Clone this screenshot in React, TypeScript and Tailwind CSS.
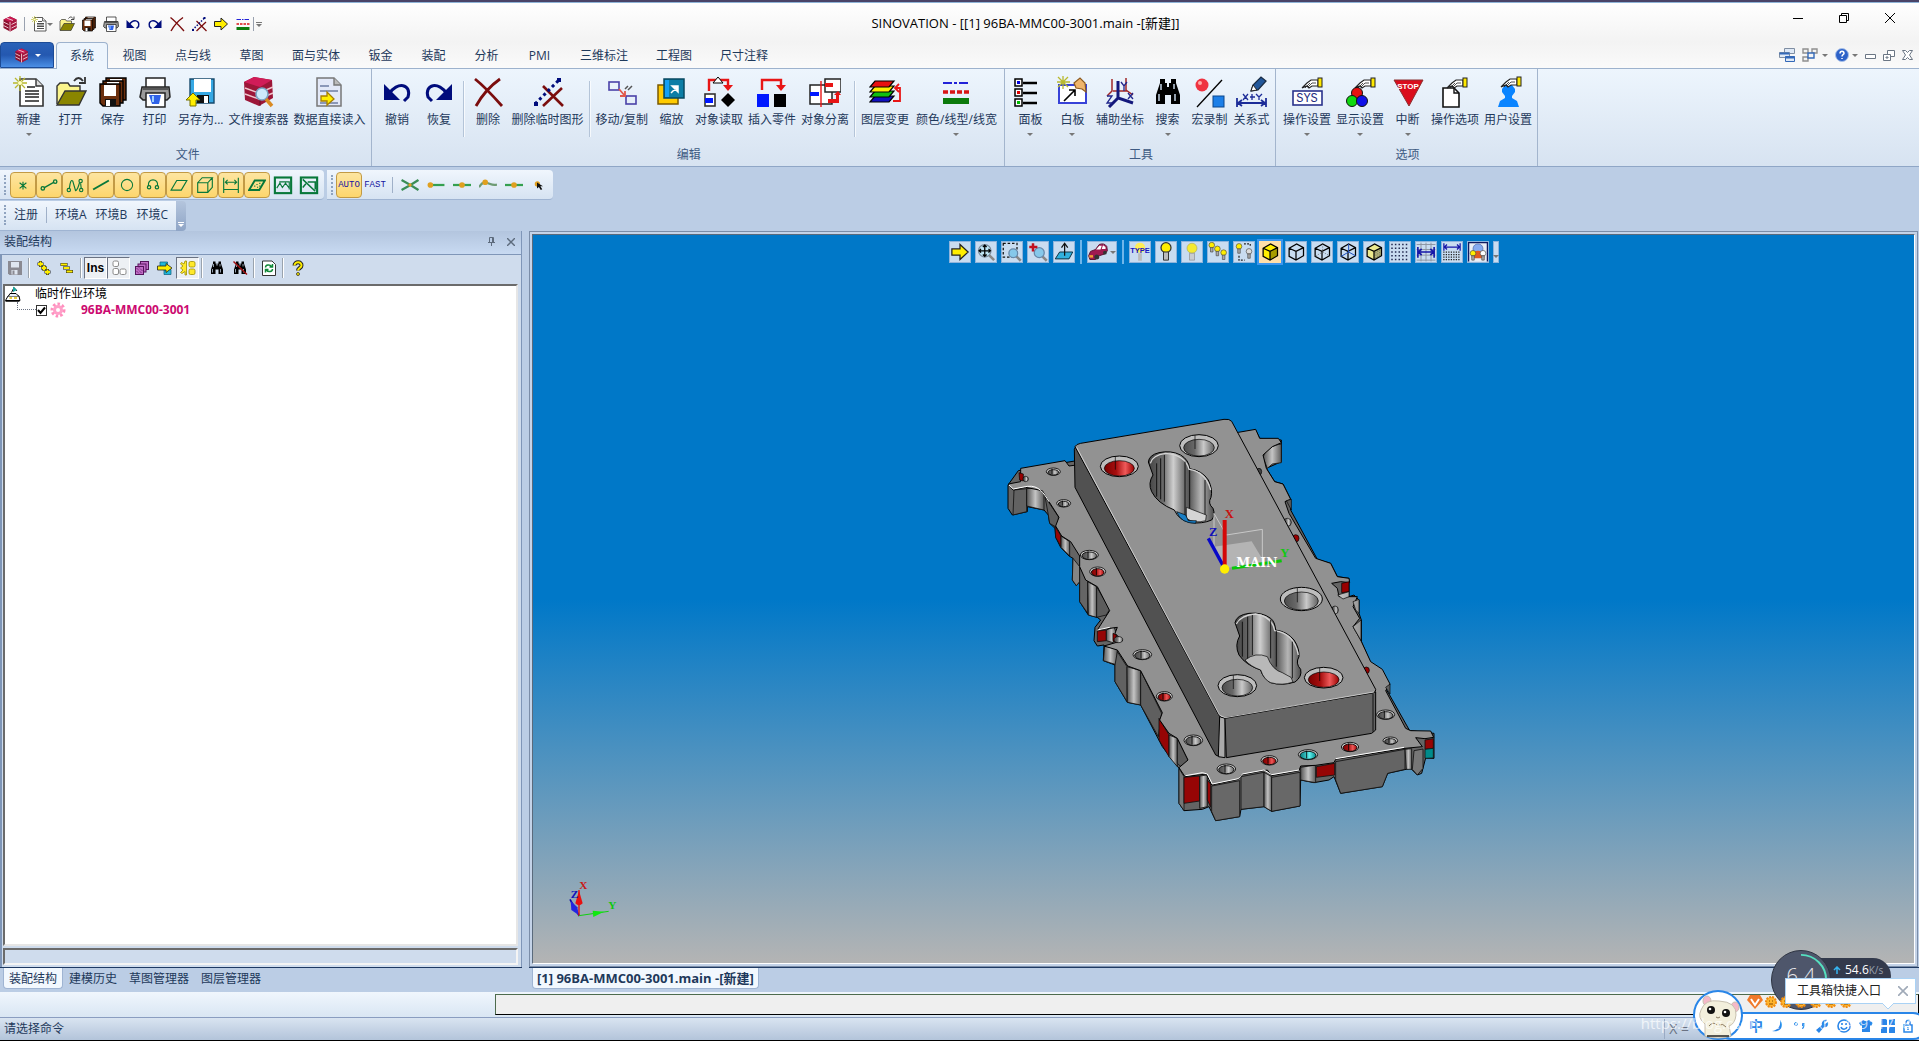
import React, { useState } from 'react'

interface RibbonItem {
  label: string
  icon: string
  menu?: boolean
  wide?: boolean
}

interface RibbonGroupData {
  title: string
  sections: RibbonItem[][]
}

const hand = (
  <g>
    <path d="M5 11L10 6L14 3H21V9H15L12 11L10 9Z" fill="#fff" stroke="#222" strokeWidth="1.1" />
    <path d="M8 11l5-5M11 10l4-4M15 6h4" stroke="#222" strokeWidth=".8" fill="none" />
    <rect x="21" y="1" width="4" height="9" fill="#ffe900" stroke="#222" />
  </g>
)

const binoculars = (
  <g fill="#000">
    <path d="M8 3h5v4h2v4h2V7h2V3h5v4l4 12v9h-9v-9h-6v9H4v-9L8 7z" />
    <path d="M9 8v6M7 18v7M22 8v5M23 18v7" stroke="#b9c8d8" strokeWidth="1.6" />
  </g>
)

const cubeLines = (
  <path d="M5 10 L17 3 L28 9 V22 L16 29 L5 23 Z M5 10 L16 15 L28 9 M16 15 V29" fill="none" stroke="#000" strokeWidth="2" />
)

const bulb = (x: number, y: number, fill: string) => (
  <g transform={`translate(${x} ${y})`}>
    <circle cx="5" cy="5" r="4.5" fill={fill} stroke="#444" />
    <path d="M3 9h4v7H3z" fill="#aaa" stroke="#444" />
  </g>
)

const floppy = (body: string, x: number, y: number) => (
  <g transform={`translate(${x} ${y})`}>
    <path d="M0 0h20v22H3l-3-3z" fill={body} stroke="#000" strokeWidth="1.4" />
    <rect x="4" y="1" width="12" height="11" fill="#fff" />
    <rect x="5" y="15" width="11" height="7" fill="#111" />
    <rect x="6" y="16" width="4" height="6" fill="#fff" />
  </g>
)

const cubeLogo = (
  <g>
    <path d="M3 7 L16 1 L29 7 V24 L16 31 L3 24 Z" fill="#8d1230" />
    <path d="M3 7 L16 1 L29 7 L16 12 Z" fill="#c81850" />
    <path d="M16 12 V31 L29 24 V7 Z" fill="#a81840" />
    <path d="M3 12 L13 17 M3 19 L13 24 M29 12 L19 17 M29 19 L19 24 M16 12 V31 M9 4 L22 9" stroke="#f4d5dc" strokeWidth="1.8" />
  </g>
)

// Cube without the white seams, used under the search lens
const cubeDark = (
  <g>
    <path d="M2 6 L12 1 L30 4 L31 22 L17 30 L3 24 Z" fill="#9c1638" />
    <path d="M2 6 L12 1 L30 4 L18 11 Z" fill="#d01c58" />
    <path d="M3 12l14 5 14-6M3 18l14 5 14-6" fill="none" stroke="#f0c4cc" strokeWidth="1.5" />
    <path d="M18 11v19" stroke="#6a0c22" />
  </g>
)

const icons: Record<string, React.ReactNode> = {
  logo: cubeLogo,
  new: (
    <g>
      <path d="M7 3h16l7 7v20H7z" fill="#fff" stroke="#333" strokeWidth="1.6" />
      <path d="M23 3v7h7" fill="#ddd" stroke="#333" strokeWidth="1.4" />
      <path d="M14 11h8M12 15h14M12 18h14M12 21h14M12 25h14" stroke="#222" strokeWidth="1.6" />
      <path d="M7 0v15M0 7h14M2 2l10 10M12 2L2 12" stroke="#b9b92e" strokeWidth="1.3" />
      <circle cx="7" cy="7" r="2" fill="#ffffc0" />
    </g>
  ),
  open: (
    <g>
      <path d="M2 28V10l3-3h8l2 3h10v5" fill="#fbf58c" stroke="#333" strokeWidth="1.4" />
      <path d="M2 29L10 15h21L24 29z" fill="#8a8500" stroke="#333" strokeWidth="1.4" />
      <path d="M19 5c3-4 6-4 9 0M30 1v6h-6" fill="none" stroke="#333" strokeWidth="1.8" />
    </g>
  ),
  save: <g>{floppy('#6b2f0d', 9, 2)}{floppy('#6b2f0d', 6, 5)}{floppy('#6b2f0d', 3, 8)}</g>,
  print: (
    <g>
      <path d="M7 2h19v10H7z" fill="#fff" stroke="#222" strokeWidth="1.5" />
      <path d="M3 11h27l1 10-3 3H4l-3-3z" fill="#9a9a9a" stroke="#222" strokeWidth="1.5" />
      <path d="M4 13h25" stroke="#555" strokeWidth="2" />
      <path d="M7 17h19v14H7z" fill="#fff" stroke="#222" strokeWidth="1.5" />
      <path d="M10 19h12l-2 9h-7z" fill="#2f62e8" />
      <path d="M14 20v6" stroke="#9fd0ff" strokeWidth="2" />
    </g>
  ),
  saveAs: (
    <g>
      <path d="M5 3h24v24H9l-4-4z" fill="#36a8e4" stroke="#174a6c" strokeWidth="1.4" />
      <rect x="9" y="3" width="17" height="13" fill="#fff" />
      <path d="M12 19h12v8H12z" fill="#111" />
      <path d="M19 20h4v7h-4z" fill="#fff" />
      <path d="M8 17l7 7h-4v6H5v-6H1z" fill="#ffee00" stroke="#777200" />
    </g>
  ),
  finder: (
    <g>
      {cubeDark}
      <circle cx="20" cy="18" r="6" fill="#cdeafb" stroke="#7aa5c4" strokeWidth="1.6" />
      <path d="M24 23l6 7" stroke="#d98a22" strokeWidth="3.5" />
    </g>
  ),
  dataRead: (
    <g>
      <path d="M4 2h17l7 7v21H4z" fill="#e3e9f8" stroke="#777" strokeWidth="1.5" />
      <path d="M21 2v7h7" fill="#bbb" stroke="#777" strokeWidth="1.4" />
      <path d="M7 10h9M7 15h18M7 27h18" stroke="#8b98b8" strokeWidth="1.8" />
      <path d="M8 20h6v-4l7 7-7 6v-4H8z" fill="#ffee00" stroke="#a87f00" strokeWidth="1.3" />
    </g>
  ),
  undo: (
    <g>
      <path d="M3 8v16h16z" fill="#000c7c" />
      <path d="M8 18C16 5 31 8 27 21l-4 4" fill="none" stroke="#000c7c" strokeWidth="3" />
    </g>
  ),
  redo: (
    <g>
      <path d="M29 8v16H13z" fill="#000c7c" />
      <path d="M24 18C16 5 1 8 5 21l4 4" fill="none" stroke="#000c7c" strokeWidth="3" />
    </g>
  ),
  cross: <path d="M3 3C12 10 22 21 30 30M28 3C18 10 9 21 4 30" fill="none" stroke="#7b0d0d" strokeWidth="2.8" />,
  crossDots: (
    <g>
      <path d="M11 10l20 20M30 12L11 30" stroke="#7b0d0d" strokeWidth="2.6" />
      <path d="M3 28L28 3" stroke="#000c7c" strokeWidth="3" strokeDasharray="3 3" />
      <path d="M25 2h4v4h-4zM2 26h4v4H2z" fill="#000c7c" />
    </g>
  ),
  move: (
    <g fill="none">
      <rect x="3" y="6" width="10" height="8" stroke="#4a41a8" strokeWidth="1.6" />
      <rect x="20" y="20" width="10" height="8" stroke="#4a41a8" strokeWidth="1.6" />
      <path d="M13 13l6 7M19 15v5h-5" stroke="#e2594b" strokeWidth="1.8" />
      <path d="M19 13l3-3M22 14l4-4" stroke="#555" strokeWidth="1.5" />
    </g>
  ),
  scale: (
    <g>
      <rect x="3" y="9" width="20" height="19" fill="#ffcb00" stroke="#7b5a00" strokeWidth="1.5" />
      <rect x="9" y="3" width="20" height="19" fill="#0d7ea6" stroke="#074860" strokeWidth="1.5" />
      <rect x="10" y="4" width="4" height="17" fill="#14a0f4" />
      <path d="M16 17l5-5M17 10h6v6z" fill="#fff" stroke="#fff" strokeWidth="1.5" />
    </g>
  ),
  objRead: (
    <g>
      <path d="M6 15V4h19v8" fill="none" stroke="#e81515" strokeWidth="2.4" />
      <path d="M20 9h10l-5 6z" fill="#e81515" />
      <path d="M15 1l5 6H10z" fill="#fff" stroke="#000" />
      <rect x="2" y="18" width="10" height="12" fill="#fff" stroke="#333" strokeWidth="1.6" />
      <rect x="2" y="22" width="8" height="5" fill="#0018ff" />
      <path d="M25 17l7 7-7 7-7-7z" fill="#000" />
    </g>
  ),
  insertPart: (
    <g>
      <path d="M6 14V4h19v7" fill="none" stroke="#e81515" strokeWidth="2.4" />
      <path d="M20 9h10l-5 6z" fill="#e81515" />
      <rect x="1" y="18" width="12" height="13" fill="#0018ff" />
      <rect x="18" y="18" width="12" height="13" fill="#000" />
    </g>
  ),
  split: (
    <g>
      <rect x="1" y="9" width="22" height="19" fill="#fff" stroke="#222" strokeWidth="1.5" />
      <rect x="16" y="3" width="16" height="13" fill="#fff" stroke="#222" strokeWidth="1.5" />
      <path d="M1 16h9v4H1z" fill="#0018ff" />
      <path d="M12 5v26" stroke="#e81515" strokeWidth="1.4" />
      <path d="M16 7h8v4h-8zM19 23h8v-4h-2l4-4 3 4h-2v8H19z" fill="#e81515" />
    </g>
  ),
  layers: (
    <g stroke="#000" strokeWidth="1.2">
      <path d="M1 26l5-6h19l-5 6z" fill="#1010c0" />
      <path d="M1 21l5-6h19l-5 6z" fill="#10c010" />
      <path d="M1 16l5-6h19l-5 6z" fill="#ffee00" />
      <path d="M1 11l5-6h19l-5 6z" fill="#e81010" />
      <path d="M24 25h7V12h-4m3-4l-4 4 4 4" fill="none" stroke="#e81515" strokeWidth="1.8" />
    </g>
  ),
  lines: (
    <g>
      <path d="M3 7h26" stroke="#2222d8" strokeWidth="2" strokeDasharray="9 2 3 2" />
      <path d="M3 16h26" stroke="#d81515" strokeWidth="3.4" strokeDasharray="5 2" />
      <path d="M3 25h26" stroke="#0c7a0c" strokeWidth="6" />
    </g>
  ),
  panel: (
    <g>
      <path d="M9 7h14M9 17h14M9 27h14" stroke="#000" strokeWidth="2.6" />
      <g fill="#fff" stroke="#000" strokeWidth="1.5">
        <rect x="1" y="3" width="7" height="7" /><rect x="1" y="13" width="7" height="7" /><rect x="1" y="23" width="7" height="7" />
      </g>
      <path d="M3 5h3v3H3z" fill="#00d" /><path d="M3 15h3v3H3z" fill="#d00" /><path d="M3 25h3v3H3z" fill="#0b0" />
    </g>
  ),
  board: (
    <g>
      <rect x="3" y="9" width="27" height="18" fill="#fff" stroke="#3742d8" strokeWidth="2" />
      <path d="M8 25L19 14M13 14h6v6" fill="none" stroke="#000" strokeWidth="1.6" />
      <path d="M18 7l6-5 5 5 1 9-4-3-6-1z" fill="#efb46b" stroke="#8d5b20" strokeWidth="1.2" />
      <path d="M7 0v13M1 6h13M2 1l10 10M12 1L2 11" stroke="#b9b92e" strokeWidth="1.3" />
    </g>
  ),
  axes: (
    <g fill="none">
      <path d="M8 3v12l-5 5M22 2v12l7 5M9 15h14" stroke="#a02828" strokeWidth="1.5" />
      <path d="M14 5v17l15 5M14 22L5 31" stroke="#14187c" strokeWidth="3" />
      <path d="M17 6l3 4 3-4M20 10v5M24 17l5 6M29 17l-5 6M3 20h5l-5 7h5" stroke="#20268c" strokeWidth="1.3" />
    </g>
  ),
  find: binoculars,
  findOff: <g>{binoculars}<path d="M3 3l27 26" stroke="#a01010" strokeWidth="3" /></g>,
  macro: (
    <g>
      <circle cx="8" cy="9" r="6.5" fill="#ef3340" /><circle cx="6" cy="7" r="2" fill="#ffaaa5" />
      <path d="M3 31L28 4" stroke="#000" strokeWidth="1.3" />
      <rect x="19" y="20" width="11" height="11" fill="#1c7fe8" stroke="#0a468c" />
    </g>
  ),
  relation: (
    <g fill="none">
      <path d="M1 22v9M30 22v9M2 27h27M6 24l-4 3 4 3M25 24l4 3-4 3" stroke="#1c2c98" strokeWidth="1.8" />
      <path d="M7 18l5 6M12 18l-5 6M14 21h5M16 18v6M20 18l3 3 3-3M23 21v3" stroke="#1c2c98" strokeWidth="1.3" />
      <path d="M15 15l2-6 8-8 5 4-8 9z" fill="#22579a" stroke="#1a2c44" strokeWidth="1.3" />
      <path d="M15 15l2-6 4 5z" fill="#fff" stroke="#222" />
    </g>
  ),
  sys: (
    <g>
      <g transform="translate(6 1)">{hand}</g>
      <rect x="2" y="15" width="29" height="14" fill="#fff" stroke="#2a328c" strokeWidth="1.6" />
      <text x="16" y="26" textAnchor="middle" fontSize="12" fill="#222a80" className="font-['Liberation_Mono']">SYS</text>
    </g>
  ),
  rgb: (
    <g stroke="#111">
      <g transform="translate(6 1)" strokeWidth="1">{hand}</g>
      <circle cx="13" cy="17" r="5.5" fill="#e81010" />
      <circle cx="8" cy="25" r="5.5" fill="#10d810" />
      <circle cx="18" cy="25" r="5.5" fill="#1010e8" />
    </g>
  ),
  stop: (
    <g>
      <path d="M2 4h29L17 30z" fill="#da0d1c" stroke="#8b3030" />
      <text x="16" y="13" textAnchor="middle" fontSize="8" fontWeight="700" fill="#fff" className="font-['Liberation_Sans']">STOP</text>
    </g>
  ),
  optionsDoc: (
    <g>
      <path d="M4 12h11l5 5v14H4z" fill="#fff" stroke="#111" strokeWidth="1.6" />
      <path d="M15 12v5h5" fill="none" stroke="#111" strokeWidth="1.4" />
      <g transform="translate(3 1)">{hand}</g>
    </g>
  ),
  user: (
    <g>
      <path d="M13 9h7l3 4v3l-3 4v2l5 3 2 6H6l2-6 5-3v-2l-3-4v-3z" fill="#0a84ff" />
      <g transform="translate(4 0)">{hand}</g>
    </g>
  ),
  arrow: <path d="M3 11h13V4l13 12-13 12v-7H3z" fill="#ffee00" stroke="#222" strokeWidth="2" />,
  point: <path d="M16 10v14M10 12l12 10M22 12L10 22" stroke="#08783a" strokeWidth="2" />,
  segment: <g fill="none" stroke="#08783a" strokeWidth="2.4"><path d="M7 21L25 11" /><circle cx="5" cy="22" r="3" /><circle cx="27" cy="10" r="3" /></g>,
  spline: <g fill="none" stroke="#08783a" strokeWidth="2"><path d="M6 22Q8 4 12 9L17 26Q20 26 24 12M26 13L27 22" /><circle cx="5" cy="25" r="3" /><circle cx="26" cy="9" r="3" /><circle cx="27" cy="25" r="3" /></g>,
  line: <path d="M2 24L30 8" stroke="#08783a" strokeWidth="3.4" />,
  circle: <circle cx="16" cy="16" r="10" fill="none" stroke="#08783a" strokeWidth="1.8" />,
  arc: <g fill="none" stroke="#08783a" strokeWidth="2.2"><path d="M8 18C5 3 27 3 24 18" /><circle cx="9" cy="20" r="3" /><circle cx="23" cy="20" r="3" /></g>,
  plane: <path d="M2 25L12 8h18L20 25z" fill="none" stroke="#08783a" strokeWidth="2" />,
  cube: <path d="M3 12h18v17H3zM3 12l8-9h18L21 12M29 3v17l-8 9" fill="none" stroke="#08783a" strokeWidth="2" />,
  dimension: <path d="M3 3v27M29 3v27M3 24h26M6 11h20M10 7l-4 4 4 4M22 7l4 4-4 4" fill="none" stroke="#08783a" strokeWidth="2" />,
  hatch: <g fill="none" stroke="#08783a"><path d="M2 25L12 8h18L20 25z" strokeWidth="3.4" /><path d="M11 18h2M15 15h2M16 20h2M20 13h2M20 18h2" strokeWidth="2" /></g>,
  view: <g fill="none" stroke="#08783a"><rect x="3" y="4" width="26" height="25" strokeWidth="3.4" /><path d="M6 21l5-8 4 7 5-7 6 8M10 11h16v12" strokeWidth="1.8" /></g>,
  viewOff: <g fill="none" stroke="#08783a"><rect x="3" y="4" width="26" height="25" strokeWidth="3.4" /><path d="M6 7l20 19M6 20l5-6M14 11h12v12" strokeWidth="2.4" /></g>,
  snapCross: <g fill="none" stroke="#3a8d55" strokeWidth="4"><path d="M1 7q15 8 30 18M1 25q15-8 30-18" /><circle cx="16" cy="16" r="3" fill="#e0a020" stroke="none" /></g>,
  snapEnd: <g><path d="M5 16h26" stroke="#35a050" strokeWidth="4" /><circle cx="6" cy="16" r="5" fill="#e0a020" /></g>,
  snapMid: <g><path d="M0 16h32" stroke="#35a050" strokeWidth="4" /><circle cx="16" cy="16" r="5" fill="#e0a020" /></g>,
  snapCurve: <g><path d="M0 20C10 2 20 20 32 15" fill="none" stroke="#6e9b74" strokeWidth="4" /><circle cx="11" cy="11" r="5" fill="#e0a020" /></g>,
  pick: <g><circle cx="9" cy="13" r="7" fill="#e0a020" /><path d="M8 9v16l5-4 5 8 4-2-5-8h7z" fill="#111" /></g>,
  plus: (
    <g fill="none">
      <path d="M9 2v12M3 8h12M16 10v12M10 16h12M23 18v12M17 24h12" stroke="#222" strokeWidth="6" />
      <path d="M9 3v10M4 8h10M16 11v10M11 16h10M23 19v10M18 24h10" stroke="#ffee00" strokeWidth="4" />
    </g>
  ),
  minus: (
    <g fill="none">
      <path d="M3 9h14M8 16h14M14 23h14" stroke="#222" strokeWidth="6" />
      <path d="M4 9h12M9 16h12M15 23h12" stroke="#ffee00" strokeWidth="4" />
    </g>
  ),
  grayDisk: <g><path d="M2 2h28v28H5l-3-3z" fill="#8a8a92" /><path d="M8 4h16v11H8zM9 20h12v9H9z" fill="#dfe6f0" /><path d="M11 21h4v8h-4z" fill="#8a8a92" /></g>,
  shapes: <g fill="#fff" stroke="#8d8d8d" strokeWidth="2"><rect x="4" y="2" width="11" height="11" rx="3" /><rect x="4" y="17" width="11" height="12" rx="3" /><rect x="18" y="18" width="12" height="11" rx="3" /></g>,
  stack: <g fill="#c06cc6" stroke="#54145c" strokeWidth="2"><rect x="13" y="3" width="16" height="16" /><rect x="8" y="8" width="16" height="16" /><rect x="3" y="13" width="16" height="16" /><path d="M5 16l11 11M5 22l6 6M10 15l8 8" strokeDasharray="2 2" /></g>,
  transfer: <g><path d="M6 4h15v10H6zM14 19h14v10H14z" fill="#20b8d8" stroke="#106080" strokeWidth="1.5" /><path d="M1 12h17V7l12 9-12 9v-5H1z" fill="#ffee00" stroke="#222" strokeWidth="1.6" /></g>,
  gearTree: <g fill="#ffe92b" stroke="#9d8d00" strokeWidth="1.6"><path d="M13 8V2h-3l-2 6-5-3-2 3 5 4-5 4 5 4-5 5 3 2 6-4v7h3V8z" /><rect x="18" y="3" width="12" height="11" rx="3" /><rect x="18" y="18" width="12" height="11" rx="3" /></g>,
  refresh: <g><path d="M3 2h19l7 7v22H3z" fill="#fff" stroke="#333" strokeWidth="2" /><path d="M9 15c0-6 9-7 12-2M23 8v6h-6M23 18c0 6-9 7-12 2M9 25v-6h6" fill="none" stroke="#118838" strokeWidth="3" /></g>,
  help: <g fill="none"><path d="M9 11c0-9 15-8 14 0 0 5-7 5-7 10" stroke="#222" strokeWidth="8" /><path d="M9 11c0-9 15-8 14 0 0 5-7 5-7 10" stroke="#ffee00" strokeWidth="4" /><circle cx="16" cy="28" r="3" fill="#ffee00" stroke="#222" strokeWidth="1.5" /></g>,
  gearPink: <g><circle cx="16" cy="16" r="12" fill="none" stroke="#ff8fbe" strokeWidth="6" strokeDasharray="5 4" /><circle cx="16" cy="16" r="10" fill="#ff9fc8" /><circle cx="16" cy="16" r="4" fill="#fff" /></g>,
  rootNode: (
    <g>
      <path d="M1 29l5-9h22l2 9z" fill="#fff" stroke="#000" strokeWidth="2" />
      <path d="M7 20l3-5h12l5 5" fill="#e9f1f8" stroke="#000" strokeWidth="2" />
      <path d="M13 13L18 3l6 7" fill="none" stroke="#111" strokeWidth="2" />
      <path d="M16 1l8 7-8 4z" fill="#18a8a0" />
      <path d="M9 24h5M18 24h6" stroke="#e0c000" strokeWidth="3" />
      <path d="M1 30h28" stroke="#000" strokeWidth="3" />
    </g>
  ),
  fit: <g><path d="M20 20l9 9" stroke="#888" strokeWidth="4" /><circle cx="14" cy="14" r="10" fill="#bfe4f4" stroke="#789" strokeWidth="2" /><path d="M14 5v18M5 14h18M11 8l3-3 3 3M11 20l3 3 3-3M8 11l-3 3 3 3M20 11l3 3-3 3" fill="none" stroke="#000" strokeWidth="2" /></g>,
  zoomBox: <g><path d="M2 2h22v22H2z" fill="none" stroke="#111" strokeWidth="2" strokeDasharray="4 3" /><path d="M23 23l7 7" stroke="#888" strokeWidth="4" /><circle cx="18" cy="18" r="7" fill="#86c8ea" stroke="#68a" strokeWidth="2" /></g>,
  zoomIn: <g><path d="M23 23l7 7" stroke="#888" strokeWidth="4" /><circle cx="18" cy="17" r="8" fill="#86c8ea" stroke="#68a" strokeWidth="2" /><path d="M8 2v13M2 8h13" stroke="#c01020" strokeWidth="4" /></g>,
  normal: <g><path d="M2 27l7-11h21l-6 11z" fill="#31b0dd" stroke="#134" strokeWidth="1.6" /><path d="M17 22V3M12 9l5-7 5 7" fill="none" stroke="#111" strokeWidth="2" /></g>,
  car: (
    <g>
      <path d="M1 22L4 15L12 12L18 4Q26 1 30 7L31 14L27 19L18 22L12 28L3 28Z" fill="#a01a50" stroke="#5b0f30" strokeWidth="1.5" />
      <path d="M13 12L18 6H22L20 12ZM22 11L24 5L28 8V11Z" fill="#fff" />
      <circle cx="14" cy="24" r="4" fill="#333" /><circle cx="27" cy="17" r="3" fill="#333" />
      <path d="M2 21h6v4H2z" fill="#f0a030" />
    </g>
  ),
  typeBulb: <g><circle cx="16" cy="9" r="8" fill="#ffee55" /><path d="M13 18h6v12h-6z" fill="#bbb" /><text x="16" y="17" textAnchor="middle" fontSize="12" fontWeight="700" fill="#1515c0" className="font-['Liberation_Sans']">TYPE</text></g>,
  bulbOn: <g><circle cx="16" cy="9" r="8" fill="#ffee00" stroke="#333" strokeWidth="2" /><path d="M12 16h8v13h-8z" fill="#bbb" stroke="#333" strokeWidth="1.6" /></g>,
  bulbSoft: <g><circle cx="16" cy="10" r="8" fill="#f4ea30" stroke="#a8a860" /><path d="M12 18h8v11h-8z" fill="#c9ccd0" stroke="#888" /></g>,
  bulbs: <g>{bulb(1, 0, '#ffee00')}{bulb(10, 6, '#ffee00')}{bulb(20, 12, '#ffee00')}</g>,
  bulbSwap: <g>{bulb(3, 2, '#ffee00')}{bulb(19, 10, '#ddd')}<path d="M16 3h10v5M8 22v7h9" fill="none" stroke="#222" strokeWidth="2" strokeDasharray="3 2" /></g>,
  shaded: <g><path d="M5 10L17 3l11 6v13l-12 7-11-6z" fill="#ffee00" /><path d="M16 15l12-6v13l-12 7z" fill="#a89c00" />{cubeLines}</g>,
  wire: cubeLines,
  hidden: <g>{cubeLines}<path d="M17 3v13L5 23M17 16l11 6" stroke="#555" strokeDasharray="2 2" fill="none" /></g>,
  axesCube: <g>{cubeLines}<path d="M17 3v13L5 23M17 16l11 6" stroke="#2050c0" strokeWidth="1.6" fill="none" /></g>,
  meshCube: <g><path d="M5 10L17 3l11 6v13l-12 7-11-6z" fill="#ece98e" /><path d="M16 15l12-6v13l-12 7z" fill="#b4b478" />{cubeLines}<path d="M19 16v10M22 14v10M25 12v10" stroke="#555" strokeDasharray="2 2" /></g>,
  dots: <path d="M2 4h28M2 10h28M2 16h28M2 22h28M2 28h28" stroke="#222a50" strokeWidth="2.4" strokeDasharray="2.4 3.4" />,
  gridDim: <g fill="none"><path d="M1 4h30M1 12h30M1 21h30M1 29h30M8 1v30M16 1v30M24 1v30" stroke="#8a93a0" strokeWidth="1.5" /><path d="M3 8v17M29 8v17M3 16h26M9 11l-5 5 5 5M23 11l5 5-5 5" stroke="#1616a8" strokeWidth="2.6" /></g>,
  dotDim: <g fill="none"><path d="M2 16h28M2 20h28M2 24h28M2 28h28" stroke="#222" strokeWidth="2" strokeDasharray="2 2" /><path d="M3 2v12M29 2v12M3 8h26M8 4L4 8l4 4M24 4l4 4-4 4" stroke="#1616a8" strokeWidth="2" /></g>,
  carBulb: <g><path d="M1 31V1h30v30" fill="#e9edf5" stroke="#111a60" strokeWidth="2" /><circle cx="16" cy="11" r="8" fill="#86aaf0" stroke="#4060a0" /><path d="M6 17q10-6 20 0v9H6z" fill="#e05a20" />{bulb(3, 13, '#ffee00')}{bulb(19, 13, '#fff')}</g>,
}

function Icon({ name, className = 'size-4' }: { name: string; className?: string }) {
  return (
    <svg viewBox="0 0 32 32" className={`${className} shrink-0`} aria-hidden="true">
      {icons[name]}
    </svg>
  )
}

const quickAccess = ['open', 'save', 'print', 'undo', 'redo', 'cross', 'crossDots', 'arrow', 'lines']

const menuTabs = ['系统', '视图', '点与线', '草图', '面与实体', '钣金', '装配', '分析', 'PMI', '三维标注', '工程图', '尺寸注释']

const ribbonGroups: RibbonGroupData[] = [
  {
    title: '文件',
    sections: [
      [
        { label: '新建', icon: 'new', menu: true },
        { label: '打开', icon: 'open' },
        { label: '保存', icon: 'save' },
        { label: '打印', icon: 'print' },
        { label: '另存为...', icon: 'saveAs' },
        { label: '文件搜索器', icon: 'finder' },
        { label: '数据直接读入', icon: 'dataRead' },
      ],
    ],
  },
  {
    title: '编辑',
    sections: [
      [
        { label: '撤销', icon: 'undo' },
        { label: '恢复', icon: 'redo' },
      ],
      [
        { label: '删除', icon: 'cross' },
        { label: '删除临时图形', icon: 'crossDots' },
      ],
      [
        { label: '移动/复制', icon: 'move' },
        { label: '缩放', icon: 'scale' },
        { label: '对象读取', icon: 'objRead' },
        { label: '插入零件', icon: 'insertPart' },
        { label: '对象分离', icon: 'split' },
      ],
      [
        { label: '图层变更', icon: 'layers' },
        { label: '颜色/线型/线宽', icon: 'lines', menu: true, wide: true },
      ],
    ],
  },
  {
    title: '工具',
    sections: [
      [
        { label: '面板', icon: 'panel', menu: true },
        { label: '白板', icon: 'board', menu: true },
        { label: '辅助坐标', icon: 'axes' },
        { label: '搜索', icon: 'find', menu: true },
        { label: '宏录制', icon: 'macro' },
        { label: '关系式', icon: 'relation' },
      ],
    ],
  },
  {
    title: '选项',
    sections: [
      [
        { label: '操作设置', icon: 'sys', menu: true },
        { label: '显示设置', icon: 'rgb', menu: true },
        { label: '中断', icon: 'stop', menu: true },
        { label: '操作选项', icon: 'optionsDoc' },
        { label: '用户设置', icon: 'user' },
      ],
    ],
  },
]

const filterTools = ['point', 'segment', 'spline', 'line', 'circle', 'arc', 'plane', 'cube', 'dimension', 'hatch']
const snapTools = ['snapCross', 'snapEnd', 'snapMid', 'snapCurve', 'snapMid', 'pick']
const viewTools = ['typeBulb', 'bulbOn', 'bulbSoft', 'bulbs', 'bulbSwap', 'shaded', 'wire', 'hidden', 'axesCube', 'meshCube', 'dots', 'gridDim', 'dotDim', 'carBulb']

function Caret({ className = 'text-[#777]' }: { className?: string }) {
  return (
    <svg viewBox="0 0 6 3" className={`h-[3px] w-1.5 shrink-0 ${className}`} aria-hidden="true">
      <path d="M0 0h6L3 3z" fill="currentColor" />
    </svg>
  )
}

function Grip() {
  return <div className="h-5 w-0 shrink-0 border-l-2 border-dotted border-[#8fa3bf]" />
}

function TitleBar() {
  return (
    <header className="grid h-[42px] shrink-0 grid-cols-[1fr_auto_1fr] items-center border-t-2 border-[#4a4468] bg-linear-to-b from-white to-[#f3f3f3] pt-1 shadow-[inset_0_1px_0_#8fb4d8]">
      <div className="flex items-center gap-1.5 pl-0.5">
        <Icon name="logo" />
        <div className="h-3.5 w-px bg-gray-400" />
        <button className="flex items-center" aria-label="新建">
          <Icon name="new" />
          <Caret />
        </button>
        {quickAccess.map(name => (
          <button key={name} aria-label={name}>
            <Icon name={name} />
          </button>
        ))}
        <div className="-ml-1 h-3.5 w-px bg-gray-400" />
        <button className="-ml-1 flex flex-col items-center gap-px" aria-label="更多">
          <span className="h-px w-1.5 bg-[#777]" />
          <Caret />
        </button>
      </div>
      <h1 className="ml-[132px] text-[13px] text-black">SINOVATION - [[1] 96BA-MMC00-3001.main -[新建]]</h1>
      <div className="flex justify-end gap-9 pr-6 pb-3 text-black">
        <button aria-label="最小化">
          <svg viewBox="0 0 10 10" className="size-2.5"><path d="M0 5.5h10" stroke="currentColor" /></svg>
        </button>
        <button aria-label="还原">
          <svg viewBox="0 0 10 10" className="size-2.5" fill="none" stroke="currentColor"><path d="M.5 2.5h7v7h-7zM2.5 2.5v-2h7v7h-2" /></svg>
        </button>
        <button aria-label="关闭">
          <svg viewBox="0 0 10 10" className="size-2.5" stroke="currentColor"><path d="M0 0l10 10M10 0L0 10" /></svg>
        </button>
      </div>
    </header>
  )
}

function MenuTabs({ active, onSelect }: { active: string; onSelect: (tab: string) => void }) {
  return (
    <nav className="flex h-[27px] shrink-0 items-stretch border-b border-[#9db2cd] bg-linear-to-b from-[#f3f3f3] to-[#fafafa]">
      <button className="mr-0.5 flex w-[54px] items-center justify-center gap-1.5 rounded-t-sm border border-[#1c4b96] bg-linear-to-b from-[#2a62b8] via-[#2458b0] to-[#4b8fe6]" aria-label="应用菜单">
        <Icon name="logo" className="size-[15px]" />
        <Caret className="text-white" />
      </button>
      {menuTabs.map(tab => (
        <button
          key={tab}
          onClick={() => onSelect(tab)}
          className={
            tab === active
              ? '-mb-px rounded-t-sm border border-b-0 border-[#9db2cd] bg-[#edf5fd] px-[13px]'
              : 'min-w-[53px] px-3.5 pt-px'
          }
        >
          {tab}
        </button>
      ))}
      <div className="ml-auto flex items-center gap-[7px] pr-1.5">
        <svg viewBox="0 0 16 14" className="h-3.5 w-4" fill="#dfe9f6" stroke="#7f8ea3">
          <path d="M5.5 .5h10v5h-10z" /><path d="M.5 4.5h10v5h-10z" /><path d="M6.5 8.5h9v5h-9z" stroke="#3469b8" /><path d="M6 9.5h10M.5 5.5h10" stroke="#3469b8" strokeWidth="2" />
        </svg>
        <div className="flex items-center gap-1">
          <svg viewBox="0 0 16 14" className="h-3.5 w-4" fill="#f4f4f4" stroke="#8f8f8f" strokeWidth="1.4">
            <path d="M1 1h5v4H1zM10 1h5v4h-5zM1 9h5v4H1z" /><path d="M6 5h6v5H6z" stroke="#3469b8" />
          </svg>
          <Caret />
        </div>
        <div className="flex items-center gap-[3px]">
          <svg viewBox="0 0 14 14" className="size-3.5">
            <circle cx="7" cy="7" r="6.5" fill="#2d62c8" stroke="#a8c0e8" />
            <path d="M5 5.5c0-3 4-3 4 0 0 1-2 1-2 3M7 10v1" fill="none" stroke="#fff" strokeWidth="1.5" />
          </svg>
          <Caret />
        </div>
        <svg viewBox="0 0 11 5" className="mt-0.5 h-[5px] w-[11px]" fill="#fff" stroke="#6b7684"><path d="M.5 .5h10v4H.5z" /></svg>
        <svg viewBox="0 0 12 11" className="h-[11px] w-3" fill="#fff" stroke="#6b7684"><path d="M4.5 .5h7v6h-7z" /><path d="M.5 4.5h7v6h-7zM3 7h2v1H3z" /></svg>
        <svg viewBox="0 0 11 10" className="h-2.5 w-[11px]" fill="#fff" stroke="#6b7684"><path d="M.5 .5h3l2 2 2-2h3L7.5 5l3 4.5h-3l-2-2-2 2h-3L3.5 5z" /></svg>
      </div>
    </nav>
  )
}

function RibbonButton({ item }: { item: RibbonItem }) {
  return (
    <button className={`flex flex-col items-center px-0.5 pt-[7px] ${item.wide ? 'min-w-[89px]' : 'min-w-[41px]'}`}>
      <Icon name={item.icon} className="size-8" />
      <span className="mt-[3px] h-[18px] leading-[18px] whitespace-nowrap">{item.label}</span>
      {item.menu && <span className="mt-1"><Caret /></span>}
    </button>
  )
}

function Ribbon() {
  return (
    <div className="flex h-[98px] shrink-0 border-b border-[#8fa6c6] bg-linear-to-b from-[#edf5fd] to-[#d7e3f1] pl-[3px]">
      {ribbonGroups.map(group => (
        <section key={group.title} className="flex flex-col border-r border-[#a3b5cd] pr-[3px] pl-[5px]">
          <div className="flex flex-1">
            {group.sections.map((section, i) => (
              <div key={i} className="flex">
                {i > 0 && <div className="mx-[3px] mt-3 h-[56px] w-0.5 border-l border-[#b4c4d8] bg-white/70" />}
                <div className="flex items-start gap-px">
                  {section.map(item => (
                    <RibbonButton key={item.label} item={item} />
                  ))}
                </div>
              </div>
            ))}
          </div>
          <h2 className="pb-[3px] text-center leading-4 text-[#3e5a82]">{group.title}</h2>
        </section>
      ))}
    </div>
  )
}

function ToolBars() {
  return (
    <div className="flex shrink-0 flex-col gap-px pt-[3px]">
      <div className="flex gap-[3px]">
        <div className="flex h-[30px] items-center rounded-r-sm border-b border-[#9fb4d2] bg-linear-to-b from-[#f0f6fd] to-[#d6e3f2] pr-0.5 pl-1">
          <Grip />
          <div className="ml-1 flex">
            {filterTools.map(name => (
              <button key={name} aria-label={name} className="flex h-[26px] w-[26px] items-center justify-center rounded-sm border border-[#c29a45] bg-linear-to-b from-[#fde5a0] to-[#fdd66c]">
                <Icon name={name} className="size-[18px]" />
              </button>
            ))}
            <button aria-label="视图" className="flex w-[26px] items-center justify-center"><Icon name="view" className="size-5" /></button>
            <button aria-label="取消视图" className="flex w-[26px] items-center justify-center"><Icon name="viewOff" className="size-5" /></button>
          </div>
        </div>
        <div className="flex h-[30px] items-center rounded-r-sm border-b border-[#9fb4d2] bg-linear-to-b from-[#f0f6fd] to-[#d6e3f2] pl-1">
          <Grip />
          <button className="ml-[3px] h-[26px] w-[26px] rounded-sm border border-[#c29a45] bg-linear-to-b from-[#fde5a0] to-[#fdd66c] font-['Liberation_Mono'] text-[9px] text-[#1414a0]">AUTO</button>
          <button className="h-[26px] w-[26px] font-['Liberation_Mono'] text-[9px] text-[#1414a0]">FAST</button>
          <div className="mx-1 h-4 w-px bg-[#9fb0c8]" />
          {snapTools.map((name, i) => (
            <button key={i} aria-label={name} className="flex h-[26px] w-[26px] items-center justify-center">
              <Icon name={name} className={name === 'pick' ? 'size-3' : 'size-[18px]'} />
            </button>
          ))}
        </div>
      </div>
      <div className="flex h-[30px]">
        <div className="flex items-center border-b border-[#9fb4d2] bg-linear-to-b from-[#f0f6fd] to-[#d6e3f2] pr-2 pb-0.5 pl-1">
          <Grip />
          <button className="ml-2">注册</button>
          <div className="mx-2 h-4 w-px bg-[#9fb0c8]" />
          <div className="flex gap-[9px]">
            <button>环境A</button>
            <button>环境B</button>
            <button>环境C</button>
          </div>
        </div>
        <button aria-label="工具栏选项" className="flex w-2.5 flex-col items-center justify-end gap-px rounded-r-sm bg-linear-to-b from-[#b4c5dd] to-[#8fa5c6] pb-1">
          <span className="h-px w-1.5 bg-white" />
          <Caret className="text-white" />
        </button>
      </div>
    </div>
  )
}

function PanelSep() {
  return <div className="mx-0.5 h-5 w-0.5 border-r border-white bg-[#9aa3ad]" />
}

function PanelButton({ name, pressed = false }: { name: string; pressed?: boolean }) {
  return (
    <button
      aria-label={name}
      className={
        pressed
          ? 'flex h-[22px] w-[23px] items-center justify-center border border-t-gray-500 border-r-white border-b-white border-l-gray-500 bg-[#edf0f4]'
          : 'flex h-[22px] w-[23px] items-center justify-center'
      }
    >
      <Icon name={name} />
    </button>
  )
}

function AssemblyPanel() {
  const [checked, setChecked] = useState(true)

  return (
    <aside className="flex w-[522px] shrink-0 flex-col border-r border-[#7f96b8]">
      <div className="flex h-[23px] shrink-0 items-center bg-linear-to-b from-[#b3c5de] to-[#c8daf2] pr-1.5 pb-0.5 pl-1">
        <h2 className="flex-1">装配结构</h2>
        <button aria-label="固定" className="mr-3">
          <svg viewBox="0 0 7 9" className="h-[9px] w-[7px]" fill="none" stroke="#5d6b7d"><path d="M1.5 5V.5h4V5M4.5 0v5M0 5.5h7M3.5 5.5V9" /></svg>
        </button>
        <button aria-label="关闭">
          <svg viewBox="0 0 8 8" className="size-2" stroke="#5d6b7d" strokeWidth="1.4"><path d="M0 0l8 8M8 0L0 8" /></svg>
        </button>
      </div>
      <div className="flex flex-1 flex-col border-t border-l-2 border-[#7f96b8] bg-[#cfdced] pr-[3px] pb-0.5 pl-px">
        <div className="flex h-[29px] shrink-0 items-center pb-[3px]">
          <PanelButton name="grayDisk" />
          <PanelSep />
          <PanelButton name="plus" />
          <PanelButton name="minus" />
          <PanelSep />
          <button className="h-[22px] w-[23px] border border-t-gray-500 border-r-white border-b-white border-l-gray-500 bg-[#edf0f4] text-center font-['Liberation_Sans'] text-xs font-bold text-black">Ins</button>
          <PanelButton name="shapes" pressed />
          <PanelButton name="stack" />
          <PanelButton name="transfer" />
          <PanelButton name="gearTree" pressed />
          <PanelSep />
          <PanelButton name="find" />
          <PanelButton name="findOff" />
          <PanelSep />
          <PanelButton name="refresh" />
          <PanelSep />
          <PanelButton name="help" />
        </div>
        <div className="flex-1 border-2 border-t-[#6b6b6b] border-r-[#e6e6e6] border-b-[#e6e6e6] border-l-[#6b6b6b] bg-white text-black">
          <div className="flex h-4 items-center gap-3.5">
            <Icon name="rootNode" />
            <span>临时作业环境</span>
          </div>
          <div className="flex h-4 items-center">
            <div className="ml-3 h-full w-[19px]">
              <div className="h-2 border-b border-l border-dotted border-gray-500" />
            </div>
            <label className="flex items-center">
              <span className="grid size-[11px] place-items-center border border-[#333]">
                <input
                  type="checkbox"
                  checked={checked}
                  onChange={e => setChecked(e.target.checked)}
                  className="col-start-1 row-start-1 size-full appearance-none"
                />
                {checked && (
                  <svg viewBox="0 0 9 9" className="pointer-events-none col-start-1 row-start-1 size-[9px]" fill="none" stroke="#000" strokeWidth="2"><path d="M1 4l2.5 3L8 1.5" /></svg>
                )}
              </span>
              <Icon name="gearPink" className="ml-[3px] size-4" />
              <span className="ml-[15px] font-bold text-[#cc0a70]">96BA-MMC00-3001</span>
            </label>
          </div>
        </div>
        <div className="mt-0.5 h-[17px] shrink-0 border-2 border-t-[#6b6b6b] border-r-[#f4f4f4] border-b-[#f4f4f4] border-l-[#6b6b6b]" />
      </div>
    </aside>
  )
}

function ViewButton({ name, selected = false }: { name: string; selected?: boolean }) {
  return (
    <button
      aria-label={name}
      className={
        selected
          ? 'flex size-[22px] items-center justify-center bg-[#ffdfa8] outline-2 outline-[#3a96f0]'
          : 'flex size-[22px] items-center justify-center border border-[#8fb4dc] bg-[#c9dcf0]'
      }
    >
      <Icon name={name} className="size-5" />
    </button>
  )
}

// Through holes: centre, radii and bore fill
const plateHoles = [
  [193, 215, 21, 11, 'url(#bore)'], [224, 310, 21, 11, 'url(#bore)'], [301, 465, 27, 14, 'url(#bore)'],
  [326, 515, 24, 14, 'url(#boreRed)'], [460, 764, 28, 15, 'url(#bore)'], [526, 889, 24, 14, 'url(#boreRed)'],
  [613, 1021, 28, 16, 'url(#bore)'], [712, 1107, 28, 15, 'url(#bore)'], [841, 1081, 25, 14, 'url(#boreRed)'],
  [957, 1064, 29, 15, 'url(#boreCyan)'], [1083, 1041, 26, 14, 'url(#boreRed)'], [1190, 944, 27, 14, 'url(#bore)'],
  [1204, 1022, 22, 11, 'url(#bore)'],
] as const

const blockHoles = [
  [391, 199, 57, 31, 'url(#boreRed)'], [630, 137, 58, 33, 'url(#bore)'], [937, 597, 63, 35, 'url(#bore)'],
  [745, 857, 58, 33, 'url(#bore)'], [1004, 833, 58, 31, 'url(#boreRed)'],
] as const

function PartModel() {
  return (
    <svg viewBox="0 0 1380 1320" className="absolute top-[165px] left-[33%] h-[440px] w-[460px]" strokeLinejoin="round">
      <defs>
        <linearGradient id="bore">
          <stop offset="0" stopColor="#4c4c4c" /><stop offset=".35" stopColor="#686868" /><stop offset=".65" stopColor="#c9c9c9" /><stop offset="1" stopColor="#606060" />
        </linearGradient>
        <linearGradient id="boreRed">
          <stop offset="0" stopColor="#7b0000" /><stop offset=".4" stopColor="#a80f0f" /><stop offset=".7" stopColor="#ef5a5a" /><stop offset="1" stopColor="#900" />
        </linearGradient>
        <linearGradient id="boreCyan">
          <stop offset="0" stopColor="#00787a" /><stop offset=".6" stopColor="#5ff0ee" /><stop offset="1" stopColor="#088" />
        </linearGradient>
        <linearGradient id="flute">
          <stop offset="0" stopColor="#555" /><stop offset=".5" stopColor="#c4c4c4" /><stop offset="1" stopColor="#5c5c5c" />
        </linearGradient>
        <linearGradient id="pocket">
          <stop offset="0" stopColor="#444" /><stop offset=".22" stopColor="#6a6a6a" /><stop offset=".38" stopColor="#cfcfcf" /><stop offset=".56" stopColor="#6a6a6a" /><stop offset=".62" stopColor="#555" /><stop offset=".8" stopColor="#b5b5b5" /><stop offset="1" stopColor="#4a4a4a" />
        </linearGradient>
      </defs>

      {/* base plate side walls */}
      <path
        d="M88 212 L57 255 V325 L70 345 L115 335 V320 L165 330 L178 345 L182 370 L198 385 L200 412 L215 442 L240 468 L252 475 L250 540 L262 557 L272 545 V605 L298 645 L325 652 L335 660 L318 682 L315 722 L325 738 L345 735 L343 782 L378 795 V845 L415 907 L455 915 L520 1040 L570 1105 V1210 L585 1232 L640 1228 L660 1220 L680 1262 L752 1250 L756 1228 L825 1220 L848 1234 L933 1218 L935 1140 L975 1148 L1020 1140 L1035 1130 L1055 1180 L1180 1160 L1196 1120 L1265 1105 L1285 1125 L1298 1120 L1310 1074 L1335 1075 V1000 L1262 992 L1200 882 L1150 800 L1117 725 V660 L1110 640 V600 L1095 585 L1080 590 V535 L1045 530 L1025 490 L985 478 L905 330 V298 L882 252 L857 245 L832 205 L877 185 V120 L812 115 L800 90 Z"
        fill="#646464" stroke="#000" strokeWidth="3"
      />
      <g stroke="#111" strokeWidth="2.5">
        <path d="M75 270 L113 266 V335 L72 345 Z" fill="#626262" />
        <path d="M113 266 C140 262 160 270 165 282 V330 L113 318 Z" fill="url(#flute)" />
        <path d="M168 290 L208 350 V385 L182 370 L178 345 Z" fill="#5f5f5f" />
        <path d="M198 378 L216 408 V440 L200 412 Z" fill="#960505" />
        <path d="M216 408 L242 425 V468 L216 442 Z" fill="url(#flute)" />
        <path d="M252 475 L272 500 V545 L262 557 L250 540 Z" fill="#858585" />
        <path d="M272 500 L296 545 V640 L272 605 Z" fill="#656565" />
        <path d="M296 545 L323 560 V652 L298 645 Z" fill="url(#flute)" />
        <path d="M323 560 L362 628 L352 645 L323 652 Z" fill="#5c5c5c" />
        <path d="M325 693 L352 690 V722 L325 725 Z" fill="#960505" />
        <path d="M352 690 L375 680 L382 700 L372 728 L352 722 Z" fill="url(#flute)" />
        <path d="M347 738 L385 745 V795 L343 782 Z" fill="url(#flute)" />
        <path d="M385 755 L414 800 V905 L378 845 V795 Z" fill="#616161" />
        <path d="M414 800 L455 812 V915 L415 907 Z" fill="url(#flute)" />
        <path d="M455 812 L518 940 L508 1010 L455 915 Z" fill="#5f5f5f" />
        <path d="M510 955 L540 1005 V1070 L510 1020 Z" fill="#960505" />
        <path d="M540 1005 L565 1015 V1100 L540 1070 Z" fill="url(#flute)" />
        <path d="M565 1015 L597 1080 L578 1102 L565 1090 Z" fill="#5b5b5b" />
        <path d="M570 1105 L585 1130 V1232 L570 1210 Z" fill="#777" />
        <path d="M585 1132 L632 1128 V1203 L585 1210 Z" fill="#960505" />
        <path d="M632 1128 L655 1125 V1220 L632 1225 Z" fill="url(#flute)" />
        <path d="M655 1140 L665 1152 V1222 L655 1200 Z" fill="#960505" />
        <path d="M668 1158 L752 1142 V1250 L680 1262 L668 1235 Z" fill="#686868" />
        <path d="M756 1130 L825 1117 V1220 L756 1228 Z" fill="#676767" />
        <path d="M825 1117 L848 1130 V1234 L825 1220 Z" fill="url(#flute)" />
        <path d="M848 1132 L933 1117 V1218 L848 1234 Z" fill="#686868" />
        <path d="M935 1102 L980 1095 V1148 L935 1140 Z" fill="url(#flute)" />
        <path d="M982 1100 L1037 1090 V1125 L982 1132 Z" fill="#960505" />
        <path d="M1040 1085 L1248 1048 V1108 L1196 1120 L1180 1160 L1055 1180 L1040 1140 Z" fill="#646464" />
        <path d="M1248 1048 L1268 1046 V1108 H1252 Z" fill="url(#flute)" />
        <path d="M1275 1052 L1302 1047 V1105 L1285 1125 L1270 1108 Z" fill="#777" />
        <path d="M1308 1020 L1333 1016 V1045 L1308 1048 Z" fill="#960505" />
        <path d="M1308 1048 L1333 1045 V1074 L1308 1075 Z" fill="#008b8b" />
        <path d="M822 172 C830 145 855 135 877 132 V188 L850 192 L835 205 Z" fill="url(#flute)" />
      </g>

      {/* base plate top face */}
      <path
        d="M95 205 L228 182 L240 198 L300 190 L748 97 L800 88 L812 115 L868 115 L877 128 L850 140 L822 165 L832 205 L857 245 L882 252 L905 298 L888 305 L900 340 L980 475 L1025 490 L1045 530 L1080 535 L1082 548 L1055 545 L1028 550 L1045 565 L1050 590 L1105 590 L1092 620 L1112 655 L1092 680 L1115 720 L1145 785 L1180 808 L1203 852 L1190 872 L1250 985 L1265 992 L1325 993 L1334 1012 L1308 1016 L1280 1013 L1300 1040 L1248 1045 L1040 1078 L1035 1088 L980 1096 L935 1098 L930 1112 L848 1127 L835 1110 L756 1125 L748 1138 L668 1155 L652 1122 L588 1130 L570 1103 L597 1080 L565 1015 L540 1000 L512 960 L520 938 L455 812 L416 798 L385 750 L345 738 L400 722 L378 700 L385 682 L325 690 L362 632 L325 560 L290 540 L272 500 L272 468 L245 425 L218 408 L200 378 L210 352 L180 305 L160 272 L110 262 L72 270 L58 252 L95 245 Z"
        fill="#919191" stroke="#000" strokeWidth="3"
      />
      <path d="M60 255 L73 267 L115 259 C150 255 165 280 180 305 M325 690 L362 682 M590 1127 L640 1118 L655 1122 L670 1152 L748 1136 L760 1122 L825 1110 L848 1124 L930 1110 M1040 1076 L1245 1042" fill="none" stroke="#fff" strokeWidth="3" />
      <path d="M90 218 L103 222 V243 L92 240 Z M372 700 L382 705 V728 L372 722 Z" fill="#900" stroke="#000" strokeWidth="2" />
      <ellipse cx="110" cy="237" rx="8" ry="8" fill="url(#bore)" stroke="#000" strokeWidth="2" />
      <ellipse cx="388" cy="719" rx="13" ry="9" fill="url(#bore)" stroke="#000" strokeWidth="2" />
      <path d="M1058 550 L1080 545 V575 L1058 578 Z" fill="#900" stroke="#000" strokeWidth="2" />
      <path d="M1046 585 L1080 575 V590 L1062 597 Z M1092 605 L1110 598 V640 L1100 630 Z M1092 680 L1116 660 V722 Z M1190 862 L1203 852 V882 Z M892 302 L907 298 V330 Z" fill="url(#flute)" stroke="#000" strokeWidth="2" />
      <g stroke="#000" strokeWidth="2">
        <ellipse cx="810" cy="215" rx="8" ry="10" fill="#444" />
        <ellipse cx="895" cy="367" rx="12" ry="12" fill="url(#bore)" />
        <ellipse cx="920" cy="415" rx="10" ry="11" fill="#900" />
        <ellipse cx="1038" cy="630" rx="10" ry="12" fill="url(#bore)" />
        <ellipse cx="1132" cy="811" rx="9" ry="10" fill="#900" />
      </g>
      {plateHoles.map(([cx, cy, rx, ry, fill]) => (
        <g key={`${cx}-${cy}`} stroke="#000" strokeWidth="2.5">
          <ellipse cx={cx} cy={cy} rx={rx} ry={ry} fill="#cfcfcf" />
          <ellipse cx={cx} cy={cy + 2} rx={rx - 5} ry={ry - 3} fill={fill} />
          <path d={`M${cx - 4} ${cy - ry + 3} V${cy + ry - 4}`} />
        </g>
      ))}

      {/* raised block */}
      <path d="M256 148 L262 136 L692 950 V1070 L680 1065 L258 262 Z" fill="#515151" stroke="#000" strokeWidth="3" />
      <path d="M692 950 L708 955 V1073 L688 1070 Z" fill="#aaa" stroke="#000" strokeWidth="3" />
      <path d="M708 955 L1160 876 V990 L1148 1000 L712 1073 Z" fill="#636363" stroke="#000" strokeWidth="3" />
      <path d="M258 140 Q262 132 275 130 L705 58 Q722 56 728 64 L1160 868 Q1163 876 1150 879 L708 953 Q695 955 690 945 Z" fill="#929292" stroke="#000" strokeWidth="3" />
      <path d="M263 142 L692 946 L708 953 L1155 876" fill="none" stroke="#ddd" strokeWidth="2.5" />
      <path d="M1152 880 V995" stroke="#000" strokeWidth="2.5" />
      {blockHoles.map(([cx, cy, rx, ry, fill]) => (
        <g key={`${cx}-${cy}`} stroke="#000" strokeWidth="3">
          <ellipse cx={cx} cy={cy} rx={rx} ry={ry} fill="#bdbdbd" />
          <ellipse cx={cx} cy={cy + 6} rx={rx - 12} ry={ry - 8} fill={fill} strokeWidth="2" />
          <path d={`M${cx - 12} ${cy - ry + 2} V${cy + 10}`} strokeWidth="2" />
        </g>
      ))}

      {/* keyhole pockets */}
      <g stroke="#000" strokeWidth="3">
        <path d="M478 186 Q480 165 510 158 Q545 150 575 165 Q600 180 602 206 Q640 212 658 240 Q672 268 666 292 Q655 310 672 325 Q680 345 668 360 Q640 372 605 368 Q570 362 556 330 Q505 310 488 275 Q476 250 492 225 Z" fill="url(#pocket)" />
        <path d="M484 190 Q490 165 530 160 Q590 165 600 208 Q650 215 665 270" fill="none" stroke="#d4d4d4" strokeWidth="4" />
        <path d="M503 190 V290 M515 175 V298 M526 165 V305 M588 185 V350 M602 210 V355 M648 240 V362" fill="none" strokeWidth="2.5" />
        <path d="M592 322 L652 345 L650 362 Q615 372 592 355 Z" fill="#d4d4d4" strokeWidth="2" />
        <path d="M563 335 L590 345 L598 362 H622 L620 370 Q575 370 563 335 Z" fill="#197ec4" strokeWidth="2" />
        <path d="M738 668 Q742 645 780 640 Q820 636 845 655 Q858 665 860 690 Q895 695 915 720 Q932 745 930 770 Q918 790 935 808 Q940 830 918 846 Q880 858 845 848 Q822 835 815 810 Q770 795 750 765 Q736 735 752 708 Z" fill="url(#pocket)" />
        <path d="M742 672 Q755 645 800 642 Q850 650 857 692 Q915 700 928 765" fill="none" stroke="#d4d4d4" strokeWidth="4" />
        <path d="M768 780 Q800 755 835 770 Q850 810 880 818 L906 832 L912 846 Q880 858 845 848 Q825 840 815 810 Q785 800 768 780 Z" fill="#b8b8b8" strokeWidth="2" />
        <path d="M760 665 V770 M776 650 V775 M790 645 V765 M845 660 V775 M862 692 V800 M910 725 V835" fill="none" strokeWidth="2.5" />
      </g>

      {/* work coordinate system */}
      <path d="M675 440 L788 424 L825 485 L710 505 Z" fill="#b4b4b4" />
      <path d="M675 440 V340 L712 405 L820 388 V480" fill="none" stroke="#c8c8c8" strokeWidth="3" />
      <path d="M658 415 L704 500" stroke="#0808c8" strokeWidth="10" />
      <path d="M729 505 L878 482" stroke="#08c808" strokeWidth="9" />
      <path d="M707 360 V500" stroke="#d40808" strokeWidth="12" />
      <circle cx="707" cy="507" r="14" fill="#ffee00" />
      <g className="font-['Liberation_Serif']" fontSize="38">
        <text x="707" y="354" fill="#c81010" fontWeight="700">X</text>
        <text x="874" y="471" fill="#10c810" fontWeight="700">Y</text>
        <text x="660" y="408" fill="#1010b8" fontWeight="700">Z</text>
      </g>
      <text x="742" y="501" fill="#fff" fontSize="38" fontWeight="700" className="font-['DejaVu_Serif']">MAIN</text>
    </svg>
  )
}

function AxisTriad() {
  return (
    <svg viewBox="0 0 360 240" className="absolute bottom-[23px] left-[7px] h-20 w-[120px]">
      <path d="M90 118 L118 168" stroke="#0808a8" strokeWidth="5" />
      <path d="M92 122 L112 142 L116 165 L94 150 Z" fill="#2424e0" />
      <path d="M117 168 V90" stroke="#e01010" strokeWidth="4" />
      <path d="M117 92 L128 130 Q117 142 106 130 Z" fill="#e81010" />
      <path d="M117 167 L206 154" stroke="#10d010" strokeWidth="3" />
      <path d="M158 152 L192 155 L160 171 Z" fill="#10e810" />
      <g className="font-['Liberation_Serif']" fontWeight="700" fontSize="34">
        <text x="118" y="86" fill="#c81818">X</text>
        <text x="92" y="113" fill="#1010b8">Z</text>
        <text x="205" y="146" fill="#10c810">Y</text>
      </g>
    </svg>
  )
}

function Viewport() {
  return (
    <main className="flex min-w-0 flex-1 border border-[#7b8da8] bg-[#c4d3e8] p-0.5">
      <div className="relative flex-1 overflow-hidden border border-t-[#5a6a7c] border-r-white border-b-white border-l-[#5a6a7c] bg-linear-to-b/srgb from-[#0078c8] from-50% to-[#b4b4b4]">
        <div className="flex items-center justify-center gap-1 pt-[5px]">
          <ViewButton name="arrow" />
          <ViewButton name="fit" />
          <ViewButton name="zoomBox" />
          <ViewButton name="zoomIn" />
          <ViewButton name="normal" />
          <div className="mx-px h-6 w-0.5 bg-[#6fb6ea]" />
          <button aria-label="显示类型" className="flex h-[22px] w-[30px] items-center justify-center gap-0.5 border border-[#8fb4dc] bg-[#c9dcf0]">
            <Icon name="car" className="size-5" />
            <Caret />
          </button>
          <div className="mx-px h-6 w-0.5 bg-[#6fb6ea]" />
          {viewTools.map(name => (
            <ViewButton key={name} name={name} selected={name === 'shaded'} />
          ))}
          <button aria-label="更多" className="flex h-[22px] w-1.5 items-end justify-center border border-[#8fb4dc] bg-[#c9dcf0] pb-1">
            <Caret />
          </button>
        </div>
        <PartModel />
        <AxisTriad />
      </div>
    </main>
  )
}

function BottomTabs() {
  const tabs = ['装配结构', '建模历史', '草图管理器', '图层管理器']
  return (
    <div className="flex h-[25px] shrink-0 items-start">
      <div className="flex w-[522px] shrink-0 border-t border-[#1f3a63] pl-[3px]">
        {tabs.map((tab, i) => (
          <button
            key={tab}
            className={i === 0 ? 'h-[21px] rounded-b-sm border border-t-0 border-[#9fb4d2] bg-[#f2f8fe] px-[5px] pt-0.5' : 'h-[21px] px-1.5 pt-px'}
          >
            {tab}
          </button>
        ))}
      </div>
      <div className="ml-[7px] flex-1 border-t border-[#1f3a63] pl-[3px]">
        <button className="block h-[21px] rounded-b-sm border border-t-0 border-[#9fb4d2] bg-[#f2f8fe] px-1 pt-px text-[13px] leading-none font-bold">[1] 96BA-MMC00-3001.main -[新建]</button>
      </div>
    </div>
  )
}

function NetMeter() {
  return (
    <div className="absolute right-[29px] bottom-[31px] flex items-start">
      <div className="absolute top-2 left-8 flex h-9 w-[88px] items-start gap-1 rounded-full bg-[#333a4c] pt-1 pl-[30px] leading-4 text-white">
        <svg viewBox="0 0 8 8" className="mt-1 size-2" fill="none" stroke="#35b4f0" strokeWidth="1.5"><path d="M4 8V1M1 4l3-3 3 3" /></svg>
        <span className="text-xs">54.6</span>
        <span className="-ml-1 text-[10px] text-gray-400">K/s</span>
      </div>
      <div className="relative mr-[59px] flex size-[60px] items-center justify-center gap-1.5 rounded-full border border-[#2e3442] bg-[#4e566b] pb-2 text-xl font-light text-white/90">
        <span>6</span>
        <span>4</span>
        <svg viewBox="0 0 60 60" className="absolute inset-0" fill="none" stroke="#55e0c0" strokeWidth="2"><path d="M30 4A26 26 0 0 1 56 30" /></svg>
      </div>
    </div>
  )
}

function InputMethodBar() {
  return (
    <div className="absolute right-0 bottom-0 h-[62px] w-[300px] overflow-hidden text-[#2a86e8]">
      <div className="absolute bottom-[32px] left-[128px] flex items-center gap-px">
        <svg viewBox="0 0 16 14" className="h-3.5 w-4"><path d="M3 0h10l3 5-8 9-8-9z" fill="#f0792a" /><path d="M4 4l4 6 4-6" stroke="#fff" strokeWidth="2" fill="none" /></svg>
        {[0, 1, 2, 3, 4, 5].map(i => (
          <svg key={i} viewBox="0 0 14 14" className="size-3.5"><circle cx="7" cy="7" r="5" fill="#ffb52e" stroke="#f08a10" strokeWidth="2" strokeDasharray="2 1" /><path d="M5 6h1M8 6h1M5 9h4" stroke="#8a4a00" /></svg>
        ))}
      </div>
      <div className="absolute -right-2 bottom-px flex h-7 w-[210px] items-center gap-2 rounded-full border-2 border-[#2a86e8] bg-white pl-[30px]">
        <button className="text-sm font-bold">中</button>
        <svg viewBox="0 0 14 14" className="size-3.5"><path d="M9 1c5 6 0 13-8 11 6-1 9-5 8-11z" fill="currentColor" /></svg>
        <svg viewBox="0 0 14 14" className="size-3.5"><circle cx="3" cy="5" r="1.5" fill="none" stroke="currentColor" /><path d="M9 4h3v3l-2 3H9l1-3H9z" fill="currentColor" /></svg>
        <svg viewBox="0 0 14 14" className="size-3.5"><path d="M1 11l6-5c-1-3 2-6 5-5L9 4l1 1 3-2c1 3-1 6-4 5l-5 6z" fill="currentColor" /></svg>
        <svg viewBox="0 0 14 14" className="size-3.5" fill="none" stroke="currentColor" strokeWidth="1.6"><circle cx="7" cy="7" r="6" /><path d="M4 8c1 3 5 3 6 0M5 4v2M9 4v2" /></svg>
        <svg viewBox="0 0 14 14" className="size-3.5"><path d="M4 1q3 2 6 0l4 3-2 3-1-1v7H3V6L2 7 0 4z" fill="currentColor" /></svg>
        <svg viewBox="0 0 14 14" className="size-3.5"><path d="M0 0h6v6H0zM8 0h6v6H8zM0 8h6v6H0zM8 8h6v6H8z" fill="currentColor" /></svg>
        <svg viewBox="0 0 10 14" className="h-3.5 w-2.5" fill="none" stroke="currentColor" strokeWidth="1.5"><path d="M1 6h8v7H1zM3 6V3q2-4 4 0v3M5 8v3" /></svg>
      </div>
      <svg viewBox="0 0 50 50" className="absolute bottom-px left-[74px] size-[50px]">
        <circle cx="25" cy="25" r="24" fill="#fff" stroke="#2a86e8" strokeWidth="2" />
        <ellipse cx="14" cy="11" rx="4" ry="5" fill="#f5b8c8" stroke="#c8c0b0" />
        <ellipse cx="42" cy="17" rx="4" ry="5" fill="#f5b8c8" stroke="#c8c0b0" />
        <path d="M8 20Q12 9 26 11Q44 12 43 25Q42 34 36 36L38 46Q25 50 12 46L12 34Q4 28 8 20z" fill="#f3efdc" stroke="#c8c0b0" />
        <circle cx="18" cy="20" r="4" fill="#111" /><circle cx="33" cy="23" r="4" fill="#111" />
        <circle cx="17" cy="19" r="1.3" fill="#fff" /><circle cx="32" cy="22" r="1.3" fill="#fff" />
        <path d="M23 27q2 2 4 0M16 36q4-5 8-1M26 35q4-2 7 2" fill="none" stroke="#8a7a60" />
        <path d="M14 46h22" stroke="#222" strokeWidth="1.5" />
      </svg>
    </div>
  )
}

function ToolboxTip() {
  return (
    <div className="absolute right-[3px] bottom-[37px] flex h-[26px] w-[131px] items-center justify-between border border-[#a9d2f5] bg-white pr-[7px] pl-[11px] text-[#222]">
      <span className="leading-none">工具箱快捷入口</span>
      <button aria-label="关闭提示">
        <svg viewBox="0 0 10 10" className="size-2.5" stroke="#a0aab8" strokeWidth="1.6"><path d="M0 0l10 10M10 0L0 10" /></svg>
      </button>
      <svg viewBox="0 0 12 6" className="absolute right-[21px] -bottom-1.5 h-1.5 w-3" fill="#fff" stroke="#a9d2f5"><path d="M0 0l6 6 6-6" /></svg>
    </div>
  )
}

export default function App() {
  const [activeTab, setActiveTab] = useState('系统')

  return (
    <div className="relative flex h-screen flex-col overflow-hidden bg-[#bbcde5] font-['Open_Sans','Noto_Sans_CJK_SC',sans-serif] text-xs text-[#1e395b]">
      <TitleBar />
      <MenuTabs active={activeTab} onSelect={setActiveTab} />
      <Ribbon />
      <ToolBars />

      <div className="flex min-h-0 flex-1 gap-[7px] pr-px">
        <AssemblyPanel />
        <Viewport />
      </div>
      <BottomTabs />

      {/* Command line */}
      <div className="flex h-[26px] shrink-0 border-b border-[#8a9dc0] bg-linear-to-b from-[#f0f6fd] to-[#d9e6f3] py-0.5">
        <input aria-label="命令" className="ml-[495px] min-w-0 flex-1 border border-t-[#4d6b4d] border-r-black border-b-black border-l-[#4d6b4d] bg-[#efefef] px-1 outline-none" />
      </div>
      <footer className="flex h-[23px] shrink-0 items-center border-b border-black bg-linear-to-b from-[#d9e4f1] to-[#b3c4da] pl-1">
        <span className="flex-1">请选择命令</span>
        <span className="mr-[230px] border-l border-[#9aabc4] pl-1 text-sm text-gray-500">X =</span>
      </footer>

      <NetMeter />
      <InputMethodBar />
      <ToolboxTip />
      <p className="pointer-events-none absolute right-2 bottom-2 text-[15px] leading-5 whitespace-nowrap text-white/70">https://blog.csdn.net/weixin_43911798</p>
    </div>
  )
}
